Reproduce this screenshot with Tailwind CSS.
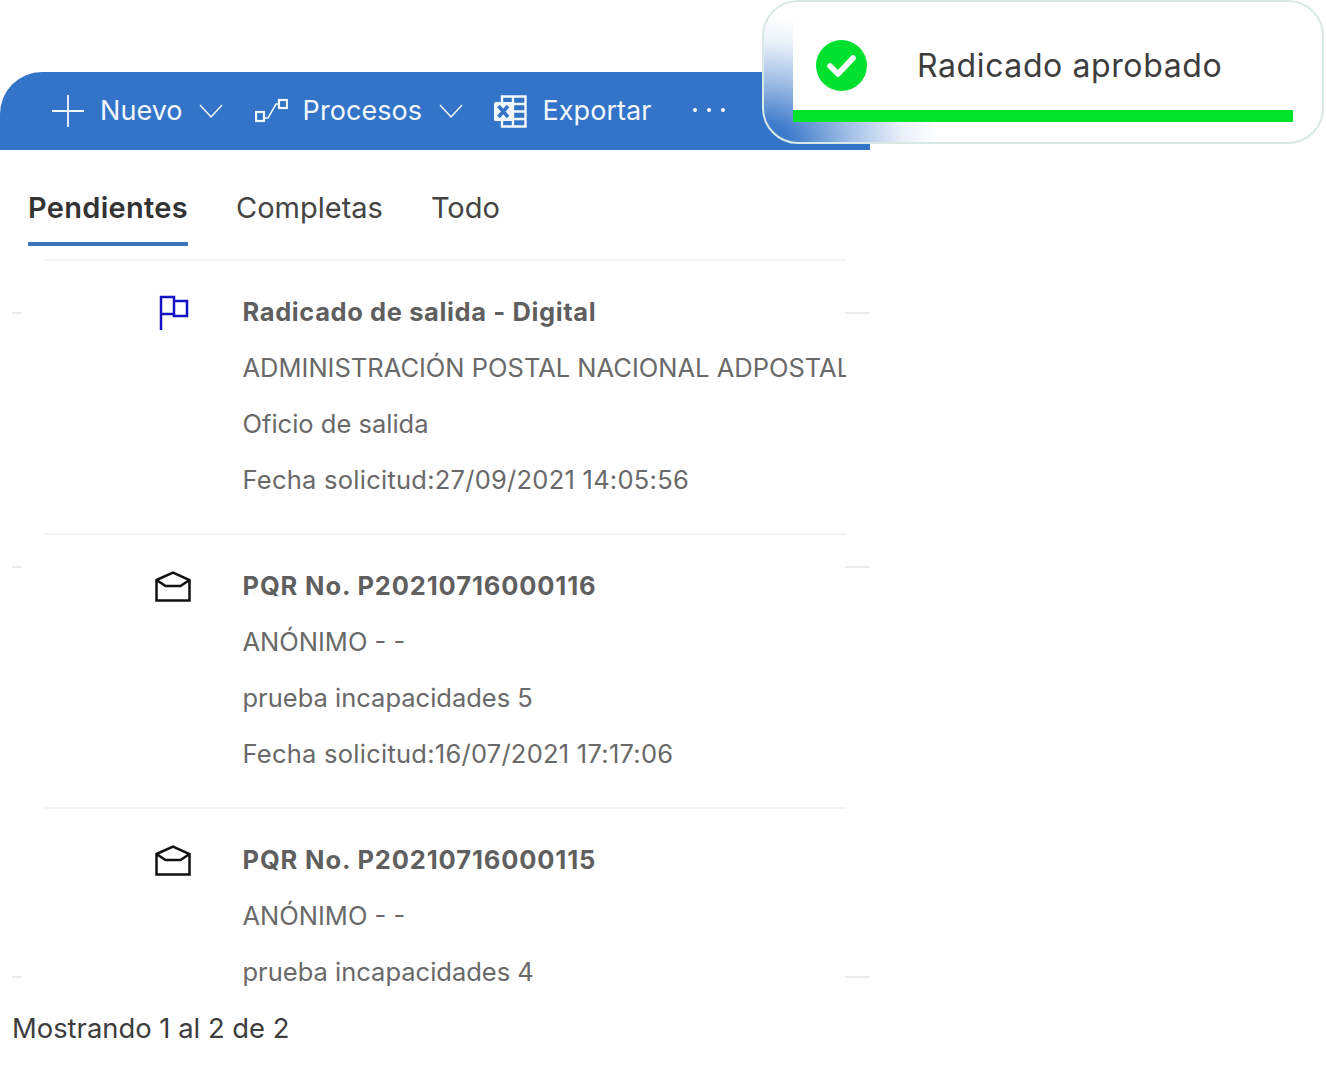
<!DOCTYPE html>
<html lang="en">

<head>
    <meta charset="UTF-8">
    <meta name="viewport" content="width=device-width, initial-scale=1.0">
    <script src="https://cdn.jsdelivr.net/npm/@tailwindcss/browser@4"></script>
    <title>Radicados</title>
</head>

<body class="bg-white [font-family:Inter,sans-serif] min-h-screen overflow-hidden">
    <div class="relative w-[1326px] h-[1075px]">
        <!-- Main panel -->
        <div class="w-[870px] pt-[72px]">
            <!-- Command bar -->
            <div class="h-[78px] bg-[#3474c8] rounded-tl-[42px] flex items-center pl-[51px] text-[27px] tracking-[0.05px] text-[#f2f7fd]">
                <svg class="w-[34px] h-[34px]" viewBox="0 0 34 34" fill="none" stroke="currentColor" stroke-width="1.8"><path d="M1 17h32M17 1v32" /></svg>
                <span class="ml-[15px]">Nuevo</span>
                <svg class="w-[24px] h-[16px] ml-[16px]" viewBox="0 0 24 16" fill="none" stroke="currentColor" stroke-width="1.5"><path d="M1 2l11 12L23 2" /></svg>
                <svg class="w-[33px] h-[26px] ml-[32px]" viewBox="0 0 33 26" fill="none" stroke="currentColor" stroke-width="2.2"><rect x="1" y="14" width="8" height="9" /><rect x="24" y="2" width="8" height="8" /><path d="M10 20l3 0 8-14 3 0" stroke-width="1.6" /></svg>
                <span class="ml-[15px]">Procesos</span>
                <svg class="w-[24px] h-[16px] ml-[17px]" viewBox="0 0 24 16" fill="none" stroke="currentColor" stroke-width="1.5"><path d="M1 2l11 12L23 2" /></svg>
                <svg class="w-[33px] h-[33px] ml-[31px]" viewBox="0 0 33 33" fill="none" stroke="currentColor" stroke-width="2.4">
                    <path d="M8 8V1.5h23.500v30H8V25M19 1.500v30M19 9h12.500M19 16.500h12.500M19 24h12.500" />
                    <rect x="0" y="7" width="19" height="19" rx="1.500" fill="currentColor" stroke="none" />
                    <path d="M4.500 11l9.500 11M14 11L4.500 22" stroke="#3474c8" stroke-width="3.500" />
                </svg>
                <span class="ml-[15.5px]">Exportar</span>
                <div class="flex gap-[10px] ml-[41px] mb-[2px]">
                    <div class="w-[4px] h-[4px] rounded-full bg-white"></div>
                    <div class="w-[4px] h-[4px] rounded-full bg-white"></div>
                    <div class="w-[4px] h-[4px] rounded-full bg-white"></div>
                </div>
            </div>

            <!-- Tabs -->
            <div class="flex gap-[48px] pl-[28px] pt-[37px] text-[29px] leading-[42px]">
                <div class="font-semibold tracking-[0.3px] text-[#333] border-b-4 border-[#3a74bd] pb-[13px]">Pendientes</div>
                <div class="text-[#444]">Completas</div>
                <div class="text-[#444]">Todo</div>
            </div>

            <!-- List -->
            <div class="relative h-[745px]">
                <div class="ml-[44px] w-[802px] h-[732px] overflow-hidden text-[25.5px] leading-[56px] text-[#696969] mt-[13px]">
                    <div class="flex border-t-2 border-[#f3f3f3] pt-[23px] pb-[25px]">
                        <div class="w-[198.5px] shrink-0 pt-[11px] pl-[115px]">
                            <svg class="w-[30px] h-[36px]" viewBox="0 0 30 36" fill="none" stroke="#1414c4" stroke-width="2.500"><path d="M2 35V2h13v17H2M15 6h13v15H15v-2" /></svg>
                        </div>
                        <div class="whitespace-nowrap">
                            <div class="font-bold tracking-[0.6px] text-[#5f5f5f]">Radicado de salida - Digital</div>
                            <div>ADMINISTRACIÓN POSTAL NACIONAL ADPOSTAL</div>
                            <div>Oficio de salida</div>
                            <div class="tracking-[0.25px]">Fecha solicitud:27/09/2021 14:05:56</div>
                        </div>
                    </div>
                    <div class="flex border-t-2 border-[#f3f3f3] pt-[23px] pb-[25px]">
                        <div class="w-[198.5px] shrink-0 pt-[13px] pl-[111px]">
                            <svg class="w-[36px] h-[31px]" viewBox="0 0 36 31" fill="none" stroke="#111" stroke-width="2.500"><path d="M1.500 9L18 1.500 34.500 9v20.500h-33zM1.500 9l9 6h15l9-6" /></svg>
                        </div>
                        <div class="whitespace-nowrap">
                            <div class="font-bold tracking-[0.87px] text-[#5f5f5f]">PQR No. P20210716000116</div>
                            <div>ANÓNIMO - -</div>
                            <div>prueba incapacidades 5</div>
                            <div class="tracking-[0.25px]">Fecha solicitud:16/07/2021 17:17:06</div>
                        </div>
                    </div>
                    <div class="flex border-t-2 border-[#f3f3f3] pt-[23px]">
                        <div class="w-[198.5px] shrink-0 pt-[13px] pl-[111px]">
                            <svg class="w-[36px] h-[31px]" viewBox="0 0 36 31" fill="none" stroke="#111" stroke-width="2.500"><path d="M1.500 9L18 1.500 34.500 9v20.500h-33zM1.500 9l9 6h15l9-6" /></svg>
                        </div>
                        <div class="whitespace-nowrap">
                            <div class="font-bold tracking-[0.87px] text-[#5f5f5f]">PQR No. P20210716000115</div>
                            <div>ANÓNIMO - -</div>
                            <div>prueba incapacidades 4</div>
                        </div>
                    </div>
                </div>
            </div>

            <!-- Footer -->
            <div class="pl-[12px] mt-[4px] text-[27.4px] leading-[40px] text-[#3d3d3d]">Mostrando 1 al 2 de 2</div>
        </div>

        <!-- Stray scrollbar ticks -->
        <div class="absolute left-[12px] top-[312px] w-[10px] h-[2px] bg-[#ececec]"></div>
        <div class="absolute left-[845px] top-[312px] w-[25px] h-[2px] bg-[#ececec]"></div>
        <div class="absolute left-[12px] top-[566px] w-[10px] h-[2px] bg-[#ececec]"></div>
        <div class="absolute left-[845px] top-[566px] w-[25px] h-[2px] bg-[#ececec]"></div>
        <div class="absolute left-[12px] top-[976px] w-[10px] h-[2px] bg-[#ececec]"></div>
        <div class="absolute left-[845px] top-[976px] w-[25px] h-[2px] bg-[#ececec]"></div>

        <!-- Toast -->
        <div class="absolute left-[762px] top-0 w-[562px] h-[144px] rounded-[36px] border-2 border-[#d8e8e5] bg-white bg-[radial-gradient(ellipse_175px_125px_at_0%_100%,rgba(52,116,200,0.95)_15%,rgba(52,116,200,0.45)_50%,rgba(52,116,200,0.1)_80%,transparent_100%)] pl-[29px] pt-[19px]">
            <div class="w-[500px] h-[101px] bg-white flex flex-col">
                <div class="flex-1 flex items-center pl-[23px]">
                    <svg class="w-[51px] h-[51px]" viewBox="0 0 51 51"><circle cx="25.5" cy="25.5" r="25.5" fill="#00e02e" /><path d="M14 26l8 8 15-16" fill="none" stroke="#fff" stroke-width="5.5" stroke-linecap="round" stroke-linejoin="round" /></svg>
                    <span class="ml-[50px] text-[32px] tracking-[0.6px] text-[#3d3d3d]">Radicado aprobado</span>
                </div>
                <div class="h-[12px] bg-[#00e32a]"></div>
            </div>
        </div>
    </div>
</body>

</html>
